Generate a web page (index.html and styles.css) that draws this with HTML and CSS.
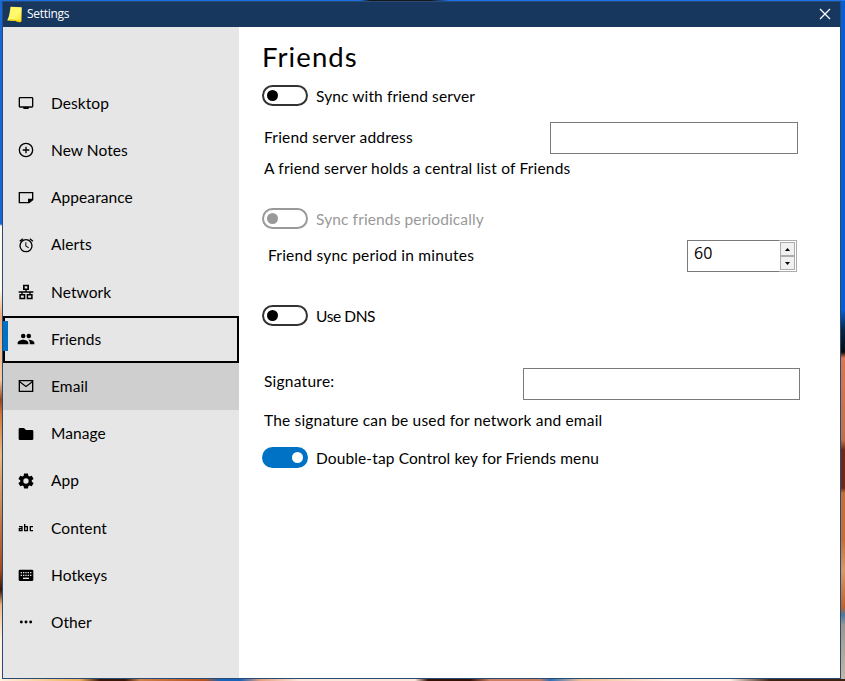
FILE: index.html
```html
<!DOCTYPE html>
<html lang="en">
<head>
<meta charset="utf-8">
<title>Settings</title>
<link rel="stylesheet" href="styles.css">
</head>
<body>
<div class="window">
  <header class="titlebar">
    <svg class="logo" width="16" height="17" viewBox="0 0 16 17"><defs><linearGradient id="note" x1="0" y1="0" x2="1" y2="1"><stop offset="0" stop-color="#fff45a"/><stop offset=".55" stop-color="#fffa70"/><stop offset="1" stop-color="#f8e020"/></linearGradient></defs><path d="M3.500 .8 14.800 1.200 14.400 15.600 12.500 16.200 8.500 15 .2 14.300Q2.500 11 3.500 .8Z" fill="url(#note)"/><path d="M.2 14.300Q3 13.200 5 13.200L12.800 14.700 14.300 13.500 14.200 15.600 12.500 16.200 8.500 15Z" fill="#ecd000"/></svg>
    <span class="title">Settings</span>
    <svg class="close" width="12" height="12" viewBox="0 0 12 12"><path d="M1 1 11 11M11 1 1 11" stroke="#fff" stroke-width="1.3"/></svg>
  </header>
  <div class="body">
    <nav class="sidebar">
      <div class="item"><svg viewBox="0 0 24 24"><path d="M21 3H3a2 2 0 0 0-2 2v12c0 1.100.9 2 2 2h5v2h8v-2h5a2 2 0 0 0 2-2V5a2 2 0 0 0-2-2Zm0 14H3V5h18Z"/></svg><span>Desktop</span></div>
      <div class="item"><svg viewBox="0 0 24 24"><path d="M13 7h-2v4H7v2h4v4h2v-4h4v-2h-4V7Zm-1-6a11 11 0 1 0 0 22 11 11 0 0 0 0-22Zm0 20a9 9 0 1 1 0-18 9 9 0 0 1 0 18Z"/></svg><span>New Notes</span></div>
      <div class="item"><svg viewBox="0 0 24 24"><path d="M1 3h22v12l-6 5H1Zm2 2v13h12v-5h6V5Z" fill-rule="evenodd"/></svg><span>Appearance</span></div>
      <div class="item"><svg viewBox="0 0 24 24"><path d="m23 5.700-4.600-3.900-1.300 1.500 4.600 3.900ZM7.900 3.400 6.600 1.900 2 5.700l1.300 1.500ZM12.500 8H11v6l4.700 2.900.8-1.300-4-2.300ZM12 3a10 10 0 1 0 0 20 10 10 0 0 0 0-20Zm0 18a8 8 0 1 1 0-16 8 8 0 0 1 0 16Z"/></svg><span>Alerts</span></div>
      <div class="item"><svg viewBox="0 0 24 24"><path d="M7.500 1h9v8H13v2h10v2h-4v2h3v8h-9v-8h4v-2H7v2h4v8H2v-8h3v-2H1v-2h10V9H7.500Zm2.500 2.200v3.600h4V3.200ZM4.300 17.200v3.600h4.400v-3.600Zm11 0v3.600h4.400v-3.600Z" fill-rule="evenodd"/></svg><span>Network</span></div>
      <div class="item focused"><svg viewBox="0 0 24 24"><path d="M16.200 11a3.400 3.400 0 1 0 0-6.800 3.400 3.400 0 0 0 0 6.800ZM7.800 11a3.400 3.400 0 1 0 0-6.800 3.400 3.400 0 0 0 0 6.800Zm0 2.200C5 13.200-.5 14.700-.5 17.500V20H15.500v-2.500c0-2.800-4.900-4.300-7.700-4.300Zm8.500 0h-1c1.400 1 2.400 2.400 2.400 4.300V20h6.800v-2.500c0-2.800-5.400-4.300-8.200-4.300Z"/></svg><span>Friends</span></div>
      <div class="item hovered"><svg viewBox="0 0 24 24"><path d="M1 3h22v18H1Zm2 4v12h18V7l-9 7Zm0-2 9 6.500L21 5Z" fill-rule="evenodd"/></svg><span>Email</span></div>
      <div class="item"><svg viewBox="0 0 24 24"><path d="M9 3H3a2 2 0 0 0-2 2v14c0 1.100.9 2 2 2h18a2 2 0 0 0 2-2V8a2 2 0 0 0-2-2h-9Z"/></svg><span>Manage</span></div>
      <div class="item"><svg viewBox="0 0 24 24"><path fill-rule="evenodd" d="m20.600 13 .1-1-.1-1 2.300-1.800c.3-.2.300-.5.200-.8l-2.300-3.900c-.1-.2-.4-.3-.7-.2l-2.700 1.100-1.900-1.100-.4-2.900c0-.3-.3-.5-.6-.5h-5c-.3 0-.5.200-.6.500l-.4 2.900-1.900 1.100-2.700-1.100c-.3-.1-.5 0-.7.200L.9 8.400c-.1.300-.1.600.2.800L3.400 11l-.1 1 .1 1-2.300 1.800c-.3.200-.3.500-.2.800l2.300 3.900c.1.200.4.300.7.200l2.700-1.100 1.900 1.100.4 2.900c.1.300.3.500.6.500h5c.3 0 .5-.2.600-.5l.4-2.900 1.900-1.100 2.700 1.100c.3.100.5 0 .7-.2l2.300-3.900c.1-.3.100-.6-.2-.8ZM12 16a4 4 0 1 1 0-8 4 4 0 0 1 0 8Z"/></svg><span>App</span></div>
      <div class="item"><svg viewBox="0 0 24 24"><path d="M1.500 10H6v6H2v-3h4M10 6v10h4v-6h-4M22.500 10h-4v6h4" fill="none" stroke="#000" stroke-width="2"/></svg><span>Content</span></div>
      <div class="item"><svg viewBox="0 0 24 24"><rect x="1" y="4" width="22" height="17" rx="2"/><path d="M4 8.500h16M4 12.500h16" stroke="#e6e6e6" stroke-width="2" stroke-dasharray="2 1.500"/><path d="M7.500 17h9" stroke="#e6e6e6" stroke-width="2"/></svg><span>Hotkeys</span></div>
      <div class="item"><svg viewBox="0 0 24 24"><circle cx="5" cy="12" r="2.200"/><circle cx="12" cy="12" r="2.200"/><circle cx="19" cy="12" r="2.200"/></svg><span>Other</span></div>
    </nav>
    <main class="panel">
      <h1>Friends</h1>
      <div class="row sync"><i class="toggle"></i><span>Sync with friend server</span></div>
      <div class="row address"><span>Friend server address</span><div class="field"></div></div>
      <div class="row hint"><span>A friend server holds a central list of Friends</span></div>
      <div class="row periodic"><i class="toggle"></i><span>Sync friends periodically</span></div>
      <div class="row period"><span>Friend sync period in minutes</span>
        <div class="field spinner"><b>60</b><div class="steps"><div class="step"><svg width="5" height="3"><path d="M0 3 2.500 0 5 3Z"/></svg></div><div class="step"><svg width="5" height="3"><path d="M0 0 2.500 3 5 0Z"/></svg></div></div></div>
      </div>
      <div class="row dns"><i class="toggle"></i><span>Use DNS</span></div>
      <div class="row signature"><span>Signature:</span><div class="field"></div></div>
      <div class="row usage"><span>The signature can be used for network and email</span></div>
      <div class="row doubletap"><i class="toggle on"></i><span>Double-tap Control key for Friends menu</span></div>
    </main>
  </div>
</div>
</body>
</html>
```
FILE: styles.css
```css
* { box-sizing: border-box; }
body {
  margin: 0; width: 845px; height: 681px; padding: 1px 4px 2px 2px; overflow: hidden;
  color: #000; font: 15.5px/20px Lato, "Noto Sans", sans-serif;
  background:
    linear-gradient(90deg, #1b6fe0 360px, #15171b 370px 430px, #1b74ea 450px) 0 0 / 100% 1px no-repeat,
    linear-gradient(90deg, #fff0df 0, #efb15d 80px, #3c1606 100px 125px, #d3834d 140px, #b55321 205px, #1b63b8 220px 240px, #e5a17e 260px, #fae8dc 300px 415px, #351105 428px 470px, #cf8060 490px 540px, #2f70bb 550px, #f1bf95 580px, #fff0e5 670px 730px, #3d2211 770px 100%) 0 679px / 100% 2px no-repeat,
    linear-gradient(#1768d5 0 224px, #fffaf0 226px 290px, #efad77 315px, #f5c99d 380px, #98451e 400px, #d87832 415px, #edbb7f 455px, #a94918 570px, #32180e 590px, #efb984 605px, #fff3e5 640px) 0 0 / 2px 100% no-repeat,
    linear-gradient(#075ed3 0 310px, #0a2444 330px, #090909 352px, #d87750 358px, #bd704e 440px, #6d2819 450px 488px, #c36f38 493px 540px, #d69968 570px, #bd632d 607px, #50779c 615px, #9a9790 625px, #c4b8a7 100%) 100% 0 / 4px 100% no-repeat;
}
.window { height: 678px; border: 1px solid #274b75; background: #fff; display: flex; flex-direction: column; }
.titlebar { height: 25px; flex: none; display: flex; align-items: center; padding: 0 9px 0 4px; background: #17375e; color: #fff; }
.title { margin-left: 4px; padding-bottom: 1px; font: 12px/16px "Open Sans", sans-serif; letter-spacing: -.3px; }
.close { margin: 0 0 1px auto; }
.body { flex: 1; display: flex; }
.sidebar { width: 236px; flex: none; padding-top: 53px; background: #e6e6e6; }
.item { height: 47.2px; display: flex; align-items: center; padding-left: 15px; letter-spacing: .08px; }
.item svg { width: 16px; height: 16px; margin: 0 17px .6px 0; overflow: visible; }
.item span { padding-bottom: 1.4px; }
.focused { position: relative; border: 2px solid #000; padding-left: 13px; }
.focused::before { content: ""; position: absolute; left: -2px; top: 3px; width: 5px; height: 30px; background: #0072c6; }
.hovered { background: #cfcfcf; }
.panel { flex: 1; padding-left: 24px; }
h1 { margin: 11px 0 0 -1px; height: 39px; font-size: 27.5px; line-height: 37px; font-weight: 400; letter-spacing: 1.1px; }
.row { height: 32px; display: flex; align-items: center; padding-left: 1px; letter-spacing: .16px; }
.toggle { width: 46px; height: 21px; flex: none; margin: 0 8px 1px -2px; display: flex; align-items: center; border: 2px solid #333; border-radius: 11px; padding: 0 3px; }
.toggle::before { content: ""; width: 11px; height: 11px; border-radius: 50%; background: #000; }
.toggle.on { background: #0072c6; border-color: #0072c6; justify-content: flex-end; padding-right: 3px; }
.toggle.on::before { background: #fff; }
.field { width: 248px; height: 32px; margin-left: auto; border: 1px solid #7a7a7a; background: #fff; }
.sync { margin-top: 3px; letter-spacing: .12px; }
.address { margin-top: 10px; padding-right: 42px; letter-spacing: .2px; }
.address span, .period > span { padding-bottom: 2px; }
.hint { margin-top: -1px; padding-bottom: 2px; letter-spacing: .19px; }
.periodic { margin-top: 18px; color: #999; letter-spacing: .12px; }
.periodic .toggle { border-color: #999; }
.periodic .toggle::before { background: #999; }
.period { margin-top: 5px; padding: 0 43px 0 5px; letter-spacing: .22px; }
.spinner { width: 110px; display: flex; }
.spinner b { font: 16px/25px "Open Sans", sans-serif; padding-left: 6px; letter-spacing: 0; }
.steps { width: 18px; height: 32px; margin: -1px -1px 0 auto; display: grid; grid-template-rows: 14px 14px; padding: 1px 1px 2px; border: solid #ababab; border-width: 1px 1px 1px 0; background: #fff; }
.step { border: 1px solid #acacac; background: #f0f0f0; display: flex; align-items: center; justify-content: center; }
.dns { margin-top: 28px; letter-spacing: -.4px; }
.signature { margin-top: 36px; padding-right: 40px; letter-spacing: .25px; }
.signature span { padding-bottom: 6px; }
.signature .field { width: 277px; }
.usage { margin-top: 5px; padding-bottom: 2px; letter-spacing: .18px; }
.doubletap { margin-top: 5px; letter-spacing: .12px; }
```
